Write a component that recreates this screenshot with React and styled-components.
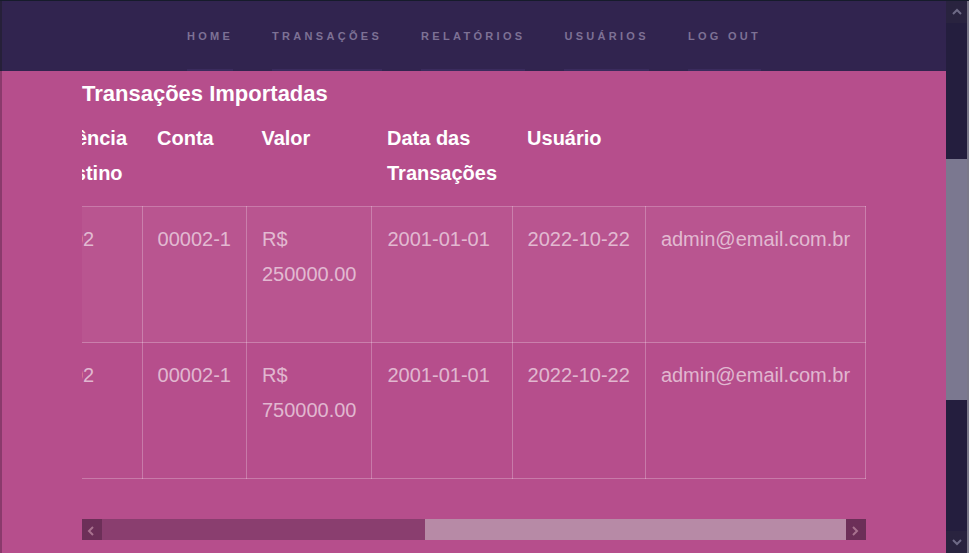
import React, { useLayoutEffect, useRef } from 'react';
import styled, { createGlobalStyle } from 'styled-components';

const COLORS = {
  NAV: '#31244f',
  NAV_TEXT: '#7d7195',
  PANEL: '#b64e8c',
  EDGE: '#8a3a6c',
  WHITE: '#ffffff',
  CELL_TEXT: 'rgba(255, 255, 255, 0.6)',
  CELL_BORDER: 'rgba(255, 255, 255, 0.25)',
};

const NAV_LINKS = ['Home', 'Transações', 'Relatórios', 'Usuários', 'Log out'];

const HEADERS = [
  'Banco Origem',
  'Agência Origem',
  'Conta Origem',
  'Banco Destino',
  'Agência Destino',
  'Conta',
  'Valor',
  'Data das Transações',
  'Usuário',
];

const ROWS = [
  ['BANCO DO BRASIL', '0001', '00001-1', 'BANCO DO BRASIL', '0002', '00002-1', 'R$ 250000.00', '2001-01-01', '2022-10-22', 'admin@email.com.br'],
  ['BANCO DO BRASIL', '0001', '00001-1', 'BANCO DO BRASIL', '0002', '00002-1', 'R$ 750000.00', '2001-01-01', '2022-10-22', 'admin@email.com.br'],
];

// break lines only at spaces, never at the hyphens of dates / accounts
const Words = ({ text }) =>
  text.split(' ').map((w, i) => (
    <React.Fragment key={i}>
      {i > 0 && ' '}
      <Word>{w}</Word>
    </React.Fragment>
  ));

const Chevron = ({ dir, color }) => {
  const points = {
    up: '2,7 6,3 10,7',
    down: '2,3 6,7 10,3',
    left: '7,2 3,6 7,10',
    right: '3,2 7,6 3,10',
  }[dir];
  return (
    <svg width="12" height="10" viewBox="0 0 12 10" style={{ overflow: 'visible' }}>
      <polyline points={points} fill="none" stroke={color} strokeWidth="2" />
    </svg>
  );
};

const ImportedTransactions = () => {
  const scrollRef = useRef(null);

  // table is shown scrolled all the way to the right
  useLayoutEffect(() => {
    const el = scrollRef.current;
    if (el) el.scrollLeft = el.scrollWidth - el.clientWidth;
  }, []);

  return (
    <Frame>
      <GlobalStyle />
      <Main>
        <Nav>
          {NAV_LINKS.map((link) => (
            <NavLink key={link}>{link}</NavLink>
          ))}
        </Nav>

        <Panel>
          <Title>Transações Importadas</Title>

          <TableScroll ref={scrollRef}>
            <Table>
              <thead>
                <tr>
                  {HEADERS.map((h) => (
                    <Th key={h}>
                      <Words text={h} />
                    </Th>
                  ))}
                </tr>
              </thead>
              <tbody>
                {ROWS.map((row, i) => (
                  <Tr key={i} striped={i % 2 === 0}>
                    {row.map((cell, j) => (
                      <Td key={j}>
                        <Words text={cell} />
                      </Td>
                    ))}
                  </Tr>
                ))}
              </tbody>
            </Table>
          </TableScroll>

          <HScrollbar>
            <HButton>
              <Chevron dir="left" color="#a8728f" />
            </HButton>
            <HTrack>
              <HThumb />
            </HTrack>
            <HButton>
              <Chevron dir="right" color="#a8728f" />
            </HButton>
          </HScrollbar>
        </Panel>
      </Main>

      <VScrollbar>
        <VButton>
          <Chevron dir="up" color="#6e6a86" />
        </VButton>
        <VTrack>
          <VThumb />
        </VTrack>
        <VButton>
          <Chevron dir="down" color="#6e6a86" />
        </VButton>
      </VScrollbar>
    </Frame>
  );
};

const GlobalStyle = createGlobalStyle`
  html, body {
    margin: 0;
    height: 100%;
    overflow: hidden;
  }

  body {
    font-family: "Liberation Sans", Arial, sans-serif;
    background: ${COLORS.PANEL};
  }
`;

const Frame = styled.div`
  display: flex;
  height: 100vh;
  box-sizing: border-box;
  border-top: 1px solid #161b2b;
`;

const Main = styled.div`
  flex: 1;
  display: flex;
  flex-direction: column;
  min-width: 0;
`;

const Nav = styled.nav`
  height: 70px;
  flex-shrink: 0;
  display: flex;
  justify-content: center;
  gap: 39px;
  background: ${COLORS.NAV};
  border-left: 2px solid #262039;
  box-sizing: border-box;
`;

const NavLink = styled.a`
  display: flex;
  align-items: center;
  padding-top: 2px;
  box-sizing: border-box;
  border-bottom: 2px solid #3a2b5d;
  color: ${COLORS.NAV_TEXT};
  font-size: 11px;
  font-weight: bold;
  letter-spacing: 0.3em;
  text-transform: uppercase;
  cursor: pointer;
`;

const Panel = styled.section`
  flex: 1;
  background: ${COLORS.PANEL};
  border-left: 2px solid ${COLORS.EDGE};
  padding: 11px 80px 0 80px;
  min-width: 0;
`;

const Title = styled.h2`
  margin: 0;
  font-size: 22px;
  line-height: 24px;
  color: ${COLORS.WHITE};
  font-weight: bold;
`;

const TableScroll = styled.div`
  overflow: hidden;
`;

const Table = styled.table`
  width: 100%;
  border-collapse: collapse;
  font-size: 20px;
  line-height: 35px;
`;

const Word = styled.span`
  white-space: nowrap;
`;

const Th = styled.th`
  padding: 15px;
  text-align: left;
  vertical-align: top;
  color: ${COLORS.WHITE};
  font-weight: bold;
`;

const Tr = styled.tr`
  background: ${(p) => (p.striped ? 'rgba(255, 255, 255, 0.045)' : 'transparent')};
`;

const Td = styled.td`
  padding: 15px;
  vertical-align: top;
  color: ${COLORS.CELL_TEXT};
  border: 1px solid ${COLORS.CELL_BORDER};
`;

const HScrollbar = styled.div`
  display: flex;
  height: 21px;
  margin-top: 40px;
`;

const HButton = styled.div`
  width: 20px;
  display: flex;
  align-items: center;
  justify-content: center;
  background: #6c2f58;
`;

const HTrack = styled.div`
  flex: 1;
  display: flex;
  justify-content: flex-end;
  background: #8a3e6f;
`;

const HThumb = styled.div`
  width: 56.6%;
  background: #b78aa6;
`;

const VScrollbar = styled.div`
  width: 21px;
  display: flex;
  flex-direction: column;
  background: #241e3e;
  border-right: 2px solid #7a7889;
`;

const VButton = styled.div`
  height: 22px;
  display: flex;
  align-items: center;
  justify-content: center;
  background: #29233f;
`;

const VTrack = styled.div`
  flex: 1;
`;

const VThumb = styled.div`
  margin-top: 136px;
  height: 241px;
  background: #7b7890;
`;

export default ImportedTransactions;
